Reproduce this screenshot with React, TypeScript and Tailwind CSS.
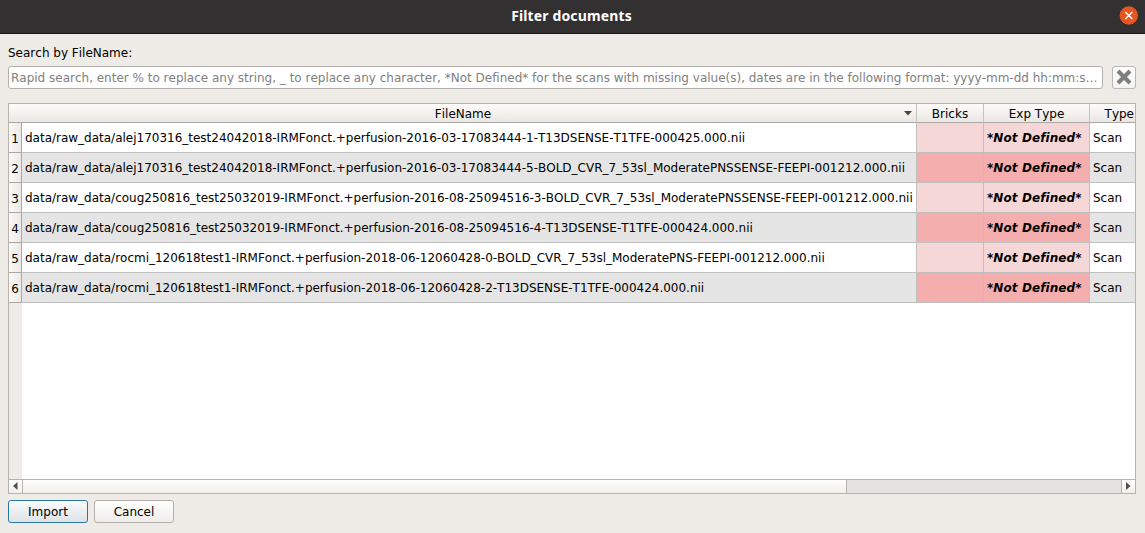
const rows = [
  'data/raw_data/alej170316_test24042018-IRMFonct.+perfusion-2016-03-17083444-1-T13DSENSE-T1TFE-000425.000.nii',
  'data/raw_data/alej170316_test24042018-IRMFonct.+perfusion-2016-03-17083444-5-BOLD_CVR_7_53sl_ModeratePNSSENSE-FEEPI-001212.000.nii',
  'data/raw_data/coug250816_test25032019-IRMFonct.+perfusion-2016-08-25094516-3-BOLD_CVR_7_53sl_ModeratePNSSENSE-FEEPI-001212.000.nii',
  'data/raw_data/coug250816_test25032019-IRMFonct.+perfusion-2016-08-25094516-4-T13DSENSE-T1TFE-000424.000.nii',
  'data/raw_data/rocmi_120618test1-IRMFonct.+perfusion-2018-06-12060428-0-BOLD_CVR_7_53sl_ModeratePNS-FEEPI-001212.000.nii',
  'data/raw_data/rocmi_120618test1-IRMFonct.+perfusion-2018-06-12060428-2-T13DSENSE-T1TFE-000424.000.nii',
];

const GRID = 'grid grid-cols-[13px_895px_67px_106px_45px]';
const PLACEHOLDER =
  'Rapid search, enter % to replace any string, _ to replace any character, *Not Defined* for the scans with missing value(s), dates are in the following format: yyyy-mm-dd hh:mm:s…';

function TitleBar() {
  return (
    <header className="grid h-[34px] shrink-0 grid-cols-[1fr_auto_1fr] items-center border-b border-[#1f121b] bg-[#323031]">
      <span />
      <h1 className="pb-px pr-[2px] font-['Noto_Sans',sans-serif] text-[14px] font-bold leading-5 tracking-[0.14px] text-white">
        Filter documents
      </h1>
      <button aria-label="Close" className="mr-[6px] mb-[3px] justify-self-end">
        <svg width="20" height="19" viewBox="0 0 20 19" className="block">
          <circle cx="9.8" cy="9.5" r="9.2" fill="#e95420" />
          <path d="M6.3 6l7 7M13.3 6l-7 7" stroke="#fff" strokeWidth="1.5" />
        </svg>
      </button>
    </header>
  );
}

function SearchBar() {
  return (
    <div className="flex h-[23px] gap-[9px]">
      <div className="flex w-[1095px] items-center overflow-hidden rounded-[3px] border border-[#b4afab] bg-white pl-[2px] tracking-[-0.006px] text-[#808080] whitespace-nowrap">
        {PLACEHOLDER}
      </div>
      <button
        aria-label="Clear"
        className="flex w-6 items-center justify-center rounded-[3px] border border-[#b9b6b3] bg-linear-to-b from-white to-[#f5f4f2] pb-px"
      >
        <svg width="16" height="16" viewBox="0 0 16 16">
          <path d="M2 2l12 12M14 2L2 14" stroke="#7f7f7f" strokeWidth="4.2" />
        </svg>
      </button>
    </div>
  );
}

function HeaderRow() {
  const cell =
    'flex items-center justify-center border-r border-b border-r-[#c6c3c0] border-b-[#aaa7a5] overflow-hidden pt-px';
  return (
    <div className={`${GRID} h-[19px] bg-linear-to-b from-[#fdfcfa] to-[#e9e6e2]`}>
      <div className="border-b border-[#aaa7a5]" />
      <div className={`${cell} relative pr-[12px]`}>
        FileName
        <svg width="8" height="5" viewBox="0 0 8 5" className="absolute right-1 top-[7px]">
          <path d="M0 0h8L4 4.4z" fill="#464646" />
        </svg>
      </div>
      <div className={cell}>Bricks</div>
      <div className={cell}>Exp Type</div>
      <div className="flex items-center justify-end border-b border-[#aaa7a5] pt-px pr-px">Type</div>
    </div>
  );
}

function DataRow({ name, index }: { name: string; index: number }) {
  const odd = index % 2 === 1;
  const cell = 'flex items-center border-r border-b border-[#c0c0c0] whitespace-nowrap';
  const pink = odd ? 'bg-[#f5aeae]' : 'bg-[#f5d7d8]';
  return (
    <div className={`${GRID} h-[30px] ${odd ? 'bg-[#e5e5e5]' : 'bg-white'}`}>
      <div className="flex items-center justify-center border-r border-b border-[#aaa7a5] bg-linear-to-r from-[#fbfaf8] to-[#ece9e5] pt-[3px]">
        {index + 1}
      </div>
      <div className={`${cell} pl-[3px] tracking-[-0.008px]`}>{name}</div>
      <div className={`${cell} ${pink}`} />
      <div className={`${cell} ${pink} pl-[3px] font-bold italic tracking-[0.08px]`}>*Not Defined*</div>
      <div className="flex items-center border-b border-[#c0c0c0] pl-[3px]">Scan</div>
    </div>
  );
}

function ScrollBar() {
  return (
    <div className="flex h-[14px] border-t border-[#b6b3b0] bg-[#e4e3df]">
      <div className="flex w-[14px] items-center justify-center border-r border-[#b6b3b0] bg-linear-to-b from-white to-[#f1efec] pr-px pb-px">
        <svg width="5" height="8" viewBox="0 0 5 8">
          <path d="M4.5 0v8L0 4z" fill="#505050" />
        </svg>
      </div>
      <div className="w-[824px] border-r border-[#b6b3b0] bg-linear-to-b from-white to-[#f1efec]" />
      <div className="flex-1" />
      <div className="flex w-[14px] items-center justify-center border-l border-[#b6b3b0] bg-linear-to-b from-white to-[#f1efec] pb-px">
        <svg width="5" height="8" viewBox="0 0 5 8">
          <path d="M0 0v8L4.5 4z" fill="#505050" />
        </svg>
      </div>
    </div>
  );
}

export default function App() {
  return (
    <div className="flex h-[533px] w-[1145px] flex-col overflow-hidden bg-[#efebe7] font-['DejaVu_Sans',sans-serif] text-[12px] leading-[14px] text-black [font-kerning:none] [font-variant-ligatures:none]">
      <TitleBar />
      <main className="flex flex-col px-2 pt-3">
        <p className="mb-[6px]">Search by FileName:</p>
        <SearchBar />
        <section className="mt-[14px] flex h-[391px] w-[1128px] flex-col border border-[#b6b3b0] bg-white">
          <HeaderRow />
          {rows.map((name, i) => (
            <DataRow key={name} name={name} index={i} />
          ))}
          <div className="w-[13px] flex-1 bg-[#efebe7]" />
          <ScrollBar />
        </section>
        <div className="mt-[6px] flex gap-[6px]">
          <button className="h-[23px] w-20 rounded-[3px] border border-[#2a76a2] bg-linear-to-b from-[#fafbfc] to-[#dde3e7]">
            Import
          </button>
          <button className="h-[23px] w-20 rounded-[3px] border border-[#b4afab] bg-linear-to-b from-white to-[#efedeb]">
            Cancel
          </button>
        </div>
      </main>
    </div>
  );
}
